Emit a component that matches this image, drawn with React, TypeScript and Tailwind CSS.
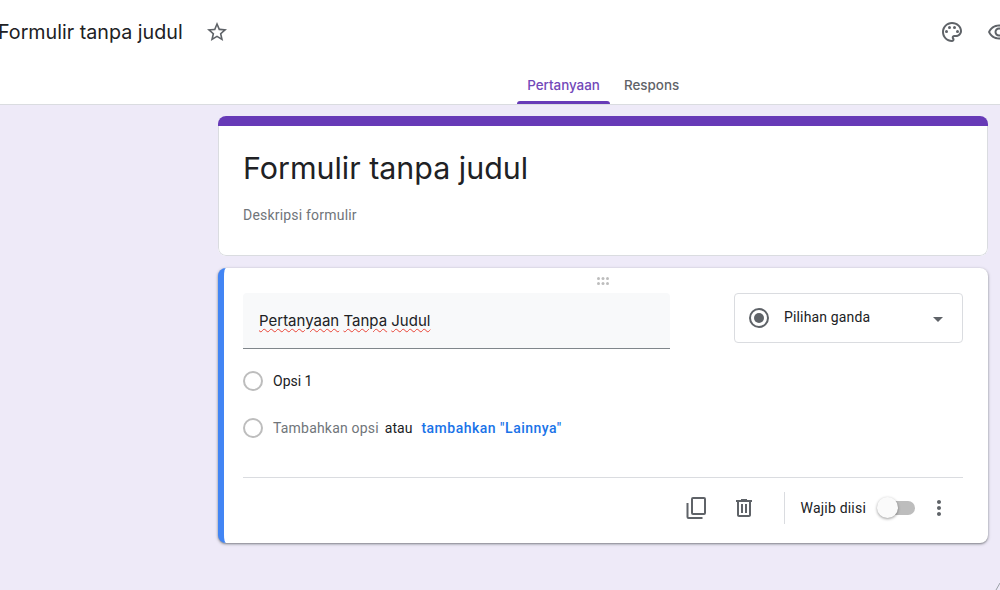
const TITLE_FONT = "font-['Inter','Noto_Sans',sans-serif]";

function Icon({ d, className, children }: { d: string; className?: string; children?: React.ReactNode }) {
  return (
    <svg viewBox="0 0 24 24" fill="currentColor" className={className}>
      <path d={d} fillRule="evenodd" />
      {children}
    </svg>
  );
}

function Radio() {
  return <div className="w-5 h-5 rounded-full border-2 border-[#bdbdbd] shrink-0" />;
}

function Misspelled({ words }: { words: string[] }) {
  return (
    <>
      {words.map((w, i) => (
        <span key={w}>
          <span className="underline decoration-wavy decoration-[#ea4335] decoration-1 underline-offset-2">{w}</span>
          {i < words.length - 1 ? ' ' : ''}
        </span>
      ))}
    </>
  );
}

export default function App() {
  return (
    <div className="w-[1000px] h-[590px] overflow-hidden bg-[#eeeaf8] relative font-['Roboto',sans-serif]">
      <header className="h-[105px] bg-white border-b border-[#dadce0] flex flex-col">
        <div className="h-[64px] flex items-center relative">
          <span className={`${TITLE_FONT} text-[19.7px] text-[#202124] ml-[-2px] mt-[2px] whitespace-nowrap`}>Formulir tanpa judul</span>
          <Icon
            className="w-6 h-6 text-[#5f6368] ml-[22px] shrink-0"
            d="M22 9.24l-7.19-.62L12 2 9.19 8.63 2 9.24l5.46 4.73L5.82 21 12 17.27 18.18 21l-1.63-7.03L22 9.24zM12 15.4l-3.76 2.27 1-4.28-3.32-2.88 4.38-.38L12 6.1l1.71 4.04 4.38.38-3.32 2.88 1 4.28L12 15.4z"
          />
          <div className="ml-auto flex items-center gap-[23px] mr-[-11px]">
            <Icon
              className="w-6 h-6 text-[#5f6368]"
              d="M12 22C6.49 22 2 17.51 2 12S6.49 2 12 2s10 4.04 10 9c0 3.31-2.69 6-6 6h-1.77c-.28 0-.5.22-.5.5 0 .12.05.23.13.33.41.47.64 1.06.64 1.67 0 1.38-1.12 2.5-2.5 2.5zm0-18c-4.41 0-8 3.59-8 8s3.59 8 8 8c.28 0 .5-.22.5-.5 0-.16-.08-.28-.14-.35-.41-.46-.63-1.05-.63-1.65 0-1.38 1.12-2.5 2.5-2.5H16c2.21 0 4-1.79 4-4 0-3.86-3.59-7-8-7z"
            >
              <circle cx="6.5" cy="11.5" r="1.5" />
              <circle cx="9.5" cy="7.5" r="1.5" />
              <circle cx="14.5" cy="7.5" r="1.5" />
              <circle cx="17.5" cy="11.5" r="1.5" />
            </Icon>
            <Icon
              className="w-6 h-6 text-[#5f6368]"
              d="M12 6.5c3.79 0 7.17 2.13 8.82 5.5-1.65 3.37-5.02 5.5-8.82 5.5S4.83 15.37 3.18 12C4.83 8.63 8.21 6.5 12 6.5m0-2C7 4.5 2.73 7.61 1 12c1.73 4.39 6 7.5 11 7.5s9.27-3.11 11-7.5c-1.73-4.39-6-7.5-11-7.5zm0 5c1.38 0 2.5 1.12 2.5 2.5s-1.12 2.5-2.5 2.5-2.5-1.12-2.5-2.5 1.12-2.5 2.5-2.5m0-2c-2.48 0-4.5 2.02-4.5 4.5s2.02 4.5 4.5 4.5 4.5-2.02 4.5-4.5-2.02-4.5-4.5-4.5z"
            />
          </div>
        </div>
        <nav className={`${TITLE_FONT} flex-1 flex pl-[517px] text-[13.4px] font-medium`}>
          <div className="w-[93px] flex flex-col items-center justify-end text-[#7248b9]">
            <span className="mb-[6px]">Pertanyaan</span>
            <div className="w-full h-[3px] rounded-t-[3px] bg-[#673ab7]" />
          </div>
          <div className="ml-[14px] flex flex-col justify-end text-[#5f6368]">
            <span className="mb-[9px]">Respons</span>
          </div>
        </nav>
      </header>

      <main className="pl-[218px] pr-[12px] pt-[11px] flex flex-col gap-3">
        <section className="h-[140px] bg-white rounded-lg overflow-hidden flex flex-col">
          <div className="h-[10px] bg-[#673ab7]" />
          <div className="flex-1 border-x border-b border-[#dadce0] rounded-b-lg pl-6 pt-[22px]">
            <h1 className={`${TITLE_FONT} text-[30.4px] leading-[40px] text-[#202124]`}>Formulir tanpa judul</h1>
            <p className="mt-[17px] text-[14px] tracking-[0.2px] leading-5 text-[#70757a]">Deskripsi formulir</p>
          </div>
        </section>

        <section className="h-[275px] bg-white rounded-lg border-l-[6px] border-[#4285f4] shadow-[0_1px_2px_rgba(60,64,67,0.5),0_1px_3px_1px_rgba(60,64,67,0.15)] flex flex-col pl-[19px] pr-[25px]">
          <div className="h-[25px] flex items-center justify-center pt-[1px]">
            <svg width="16" height="10" viewBox="0 0 16 10" fill="#bdbdbd">
              <rect x="2" y="1" width="3" height="3" rx="1.5" />
              <rect x="6.5" y="1" width="3" height="3" rx="1.5" />
              <rect x="11" y="1" width="3" height="3" rx="1.5" />
              <rect x="2" y="6" width="3" height="3" rx="1.5" />
              <rect x="6.5" y="6" width="3" height="3" rx="1.5" />
              <rect x="11" y="6" width="3" height="3" rx="1.5" />
            </svg>
          </div>

          <div className="flex justify-between items-start">
            <div className={`${TITLE_FONT} w-[427px] h-[56px] bg-[#f8f9fa] rounded-t border-b border-[#80868b] flex items-center pl-4 pt-[2px] text-[15px] text-[#202124]`}>
              <span>
                <Misspelled words={['Pertanyaan', 'Tanpa', 'Judul']} />
              </span>
            </div>
            <div className="w-[229px] h-[50px] border border-[#dadce0] rounded flex items-center pl-[14px] pr-[19px] bg-white">
              <svg viewBox="0 0 20 20" className="w-5 h-5 shrink-0">
                <circle cx="10" cy="10" r="9" fill="none" stroke="#5f6368" strokeWidth="2" />
                <circle cx="10" cy="10" r="5" fill="#5f6368" />
              </svg>
              <span className="ml-[15px] mb-[2px] text-[14px] tracking-[0.15px] text-[#202124]">Pilihan ganda</span>
              <div className="ml-auto w-0 h-0 border-x-[5px] border-x-transparent border-t-[5px] border-t-[#5f6368] mt-[2px]" />
            </div>
          </div>

          <div className="mt-[22px] flex items-center h-5">
            <Radio />
            <span className="ml-[10px] text-[14px] text-[#202124]">Opsi 1</span>
          </div>

          <div className="mt-[27px] flex items-center h-5 text-[14px]">
            <Radio />
            <span className="ml-[10px] text-[#70757a] tracking-[0.2px]">Tambahkan opsi</span>
            <span className="ml-[6px] text-[#202124]">atau</span>
            <span className="ml-[9px] text-[#1a73e8] font-medium tracking-[0.5px]">tambahkan "Lainnya"</span>
          </div>

          <div className="mt-[39px] border-t border-[#dadce0] flex-1 flex items-center justify-end pb-[5px]">
            <Icon
              className="w-6 h-6 text-[#5f6368]"
              d="M9 1h11a2 2 0 0 1 2 2v14a2 2 0 0 1-2 2H9a2 2 0 0 1-2-2V3a2 2 0 0 1 2-2zm0 2v14h11V3zM2.5 7h2v14h14v2h-14a2 2 0 0 1-2-2z"
            />
            <Icon
              className="w-6 h-6 text-[#5f6368] ml-[24px]"
              d="M15 4V3H9v1H4v2h1v13c0 1.1.9 2 2 2h10c1.1 0 2-.9 2-2V6h1V4h-5zm2 15H7V6h10v13zM9 8h2v9H9zm4 0h2v9h-2z"
            />
            <div className="w-px h-8 bg-[#dadce0] ml-[28px]" />
            <span className="ml-[16px] text-[14px] tracking-[0.2px] text-[#202124]">Wajib diisi</span>
            <div className="relative w-[37px] h-[14px] rounded-full bg-[#bdbdbd] ml-[12px]">
              <div className="absolute left-[-1px] top-[-4px] w-[21px] h-[21px] rounded-full bg-[#fafafa] shadow-[0_1px_3px_rgba(0,0,0,0.4)]" />
            </div>
            <Icon
              className="w-6 h-6 text-[#5f6368] ml-[12px] mr-[12px]"
              d="M12 8c1.1 0 2-.9 2-2s-.9-2-2-2-2 .9-2 2 .9 2 2 2zm0 2c-1.1 0-2 .9-2 2s.9 2 2 2 2-.9 2-2-.9-2-2-2zm0 6c-1.1 0-2 .9-2 2s.9 2 2 2 2-.9 2-2-.9-2-2-2z"
            />
          </div>
        </section>
      </main>

      <svg width="16" height="12" viewBox="0 0 16 12" className="absolute right-0 bottom-0">
        <path d="M12 12 L16 5" stroke="#9aa0a6" strokeWidth="1" fill="none" />
      </svg>
    </div>
  );
}
